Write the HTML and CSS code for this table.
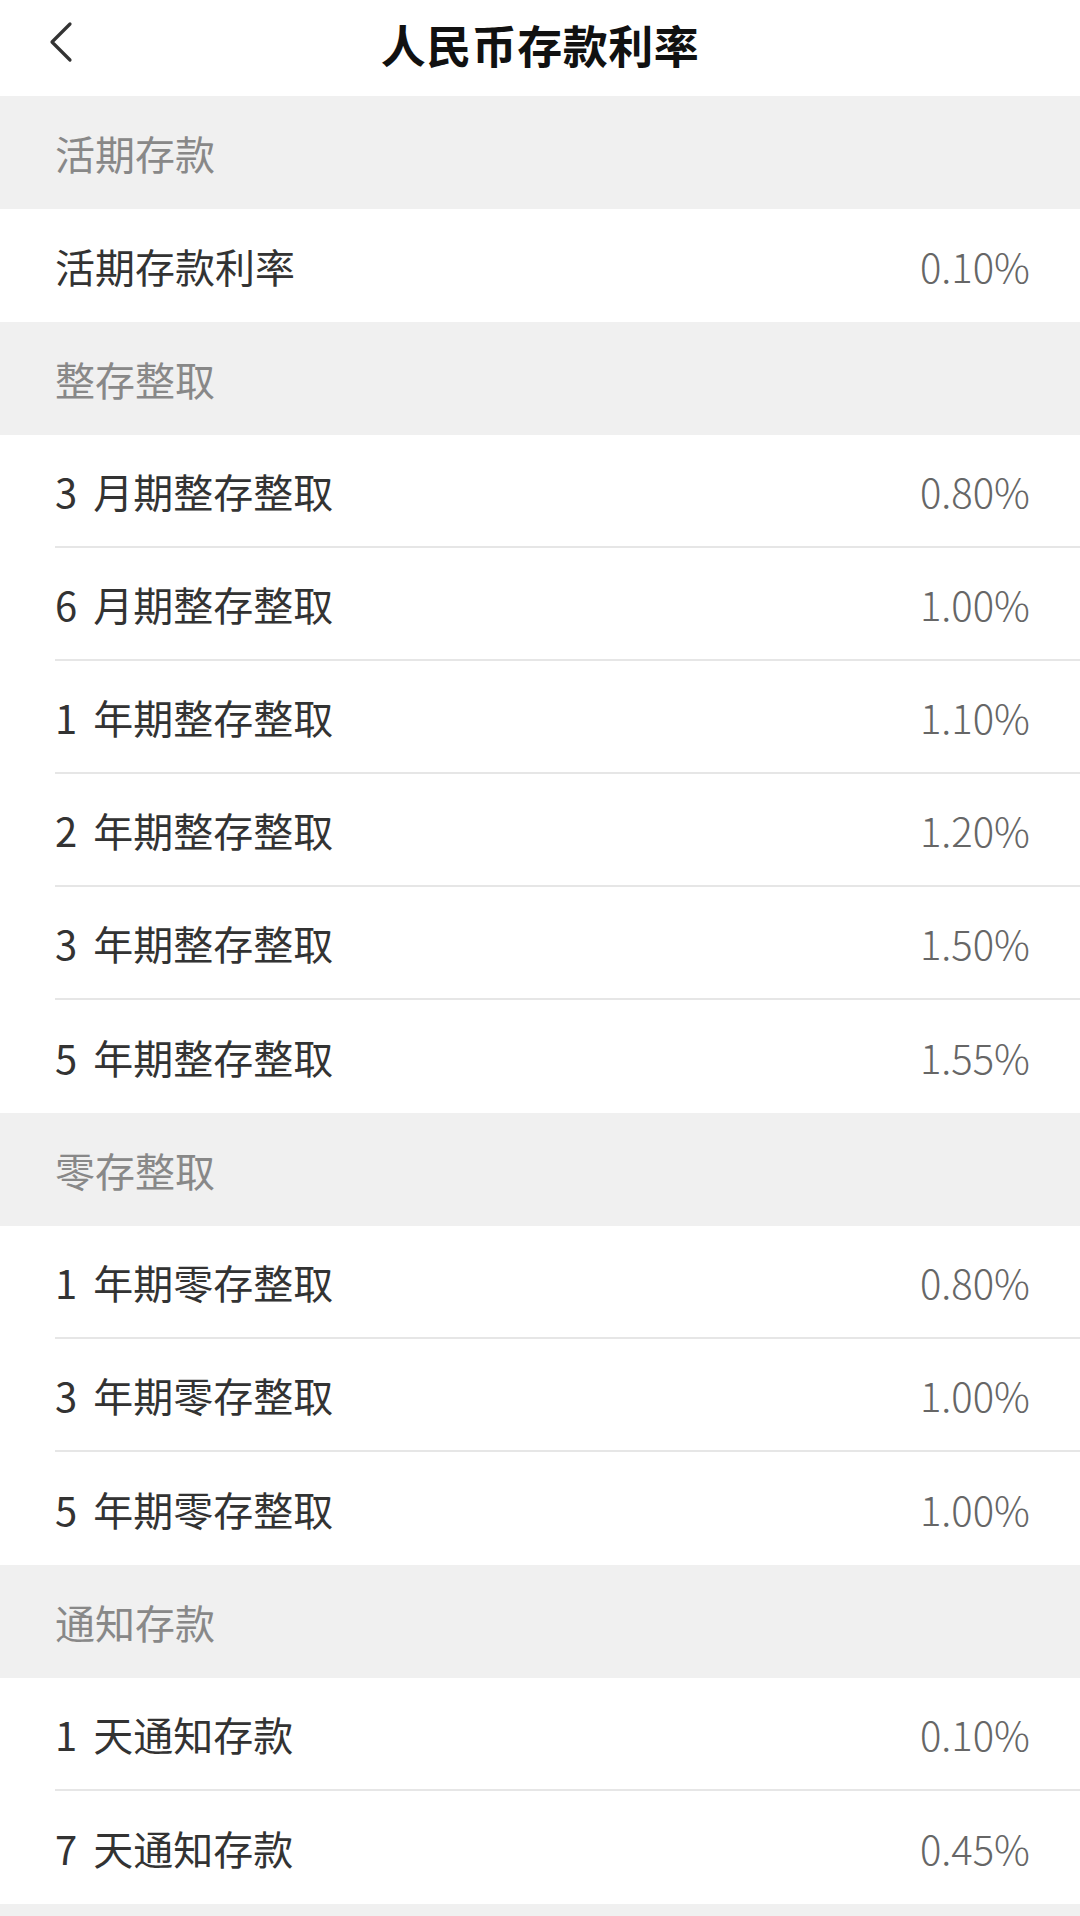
FILE: index.html
```html
<!DOCTYPE html>
<html lang="zh-CN">
<head>
<meta charset="utf-8">
<title>人民币存款利率</title>
<link rel="stylesheet" href="styles.css">
</head>
<body>
<header class="topbar">
  <svg class="back" width="30" height="44" viewBox="0 0 30 44"><polyline points="24,4 6,22 24,40" fill="none" stroke="#333" stroke-width="3.2" stroke-linecap="round" stroke-linejoin="round"/></svg>
  <h1 class="title">人民币存款利率</h1>
</header>
<main>
  <div class="section">活期存款</div>
  <div class="row"><div class="inner"><span class="label">活期存款利率</span><span class="value">0.10%</span></div></div>

  <div class="section">整存整取</div>
  <div class="row"><div class="inner"><span class="label">3 月期整存整取</span><span class="value">0.80%</span></div></div>
  <div class="row"><div class="inner"><span class="label">6 月期整存整取</span><span class="value">1.00%</span></div></div>
  <div class="row"><div class="inner"><span class="label">1 年期整存整取</span><span class="value">1.10%</span></div></div>
  <div class="row"><div class="inner"><span class="label">2 年期整存整取</span><span class="value">1.20%</span></div></div>
  <div class="row"><div class="inner"><span class="label">3 年期整存整取</span><span class="value">1.50%</span></div></div>
  <div class="row"><div class="inner"><span class="label">5 年期整存整取</span><span class="value">1.55%</span></div></div>

  <div class="section">零存整取</div>
  <div class="row"><div class="inner"><span class="label">1 年期零存整取</span><span class="value">0.80%</span></div></div>
  <div class="row"><div class="inner"><span class="label">3 年期零存整取</span><span class="value">1.00%</span></div></div>
  <div class="row"><div class="inner"><span class="label">5 年期零存整取</span><span class="value">1.00%</span></div></div>

  <div class="section">通知存款</div>
  <div class="row"><div class="inner"><span class="label">1 天通知存款</span><span class="value">0.10%</span></div></div>
  <div class="row"><div class="inner"><span class="label">7 天通知存款</span><span class="value">0.45%</span></div></div>
  <div class="footer-gap"></div>
</main>
</body>
</html>
```
FILE: styles.css
```css
html, body {
  margin: 0;
  padding: 0;
  background: #ffffff;
  font-family: "Noto Sans CJK SC", "Noto Sans", sans-serif;
}
.topbar {
  position: relative;
  height: 96px;
  display: flex;
  align-items: center;
  justify-content: center;
  background: #fff;
}
.back {
  position: absolute;
  left: 46px;
  top: 20px;
}
.title {
  margin: 0 0 8px 0;
  font-size: 45px;
  font-weight: 700;
  color: #111;
  letter-spacing: 0.5px;
}
.section {
  height: 113px;
  box-sizing: border-box;
  background: #f0f0f0;
  display: flex;
  align-items: center;
  padding-left: 55px;
  font-size: 40px;
  color: #888;
}
.row {
  height: 113px;
  padding-left: 55px;
  background: #fff;
}
.inner {
  height: 100%;
  box-sizing: border-box;
  display: flex;
  align-items: center;
  justify-content: space-between;
  padding-right: 50px;
  border-bottom: 2px solid #e6e6e6;
}
.row:has(+ .section) .inner,
.row:has(+ .footer-gap) .inner {
  border-bottom: none;
}
.label {
  font-size: 40px;
  color: #333;
  word-spacing: 7px;
  font-variant-numeric: proportional-nums;
}
.value {
  font-size: 40px;
  font-weight: 300;
  color: #666;
}
.footer-gap {
  height: 20px;
  background: #f0f0f0;
}
```
